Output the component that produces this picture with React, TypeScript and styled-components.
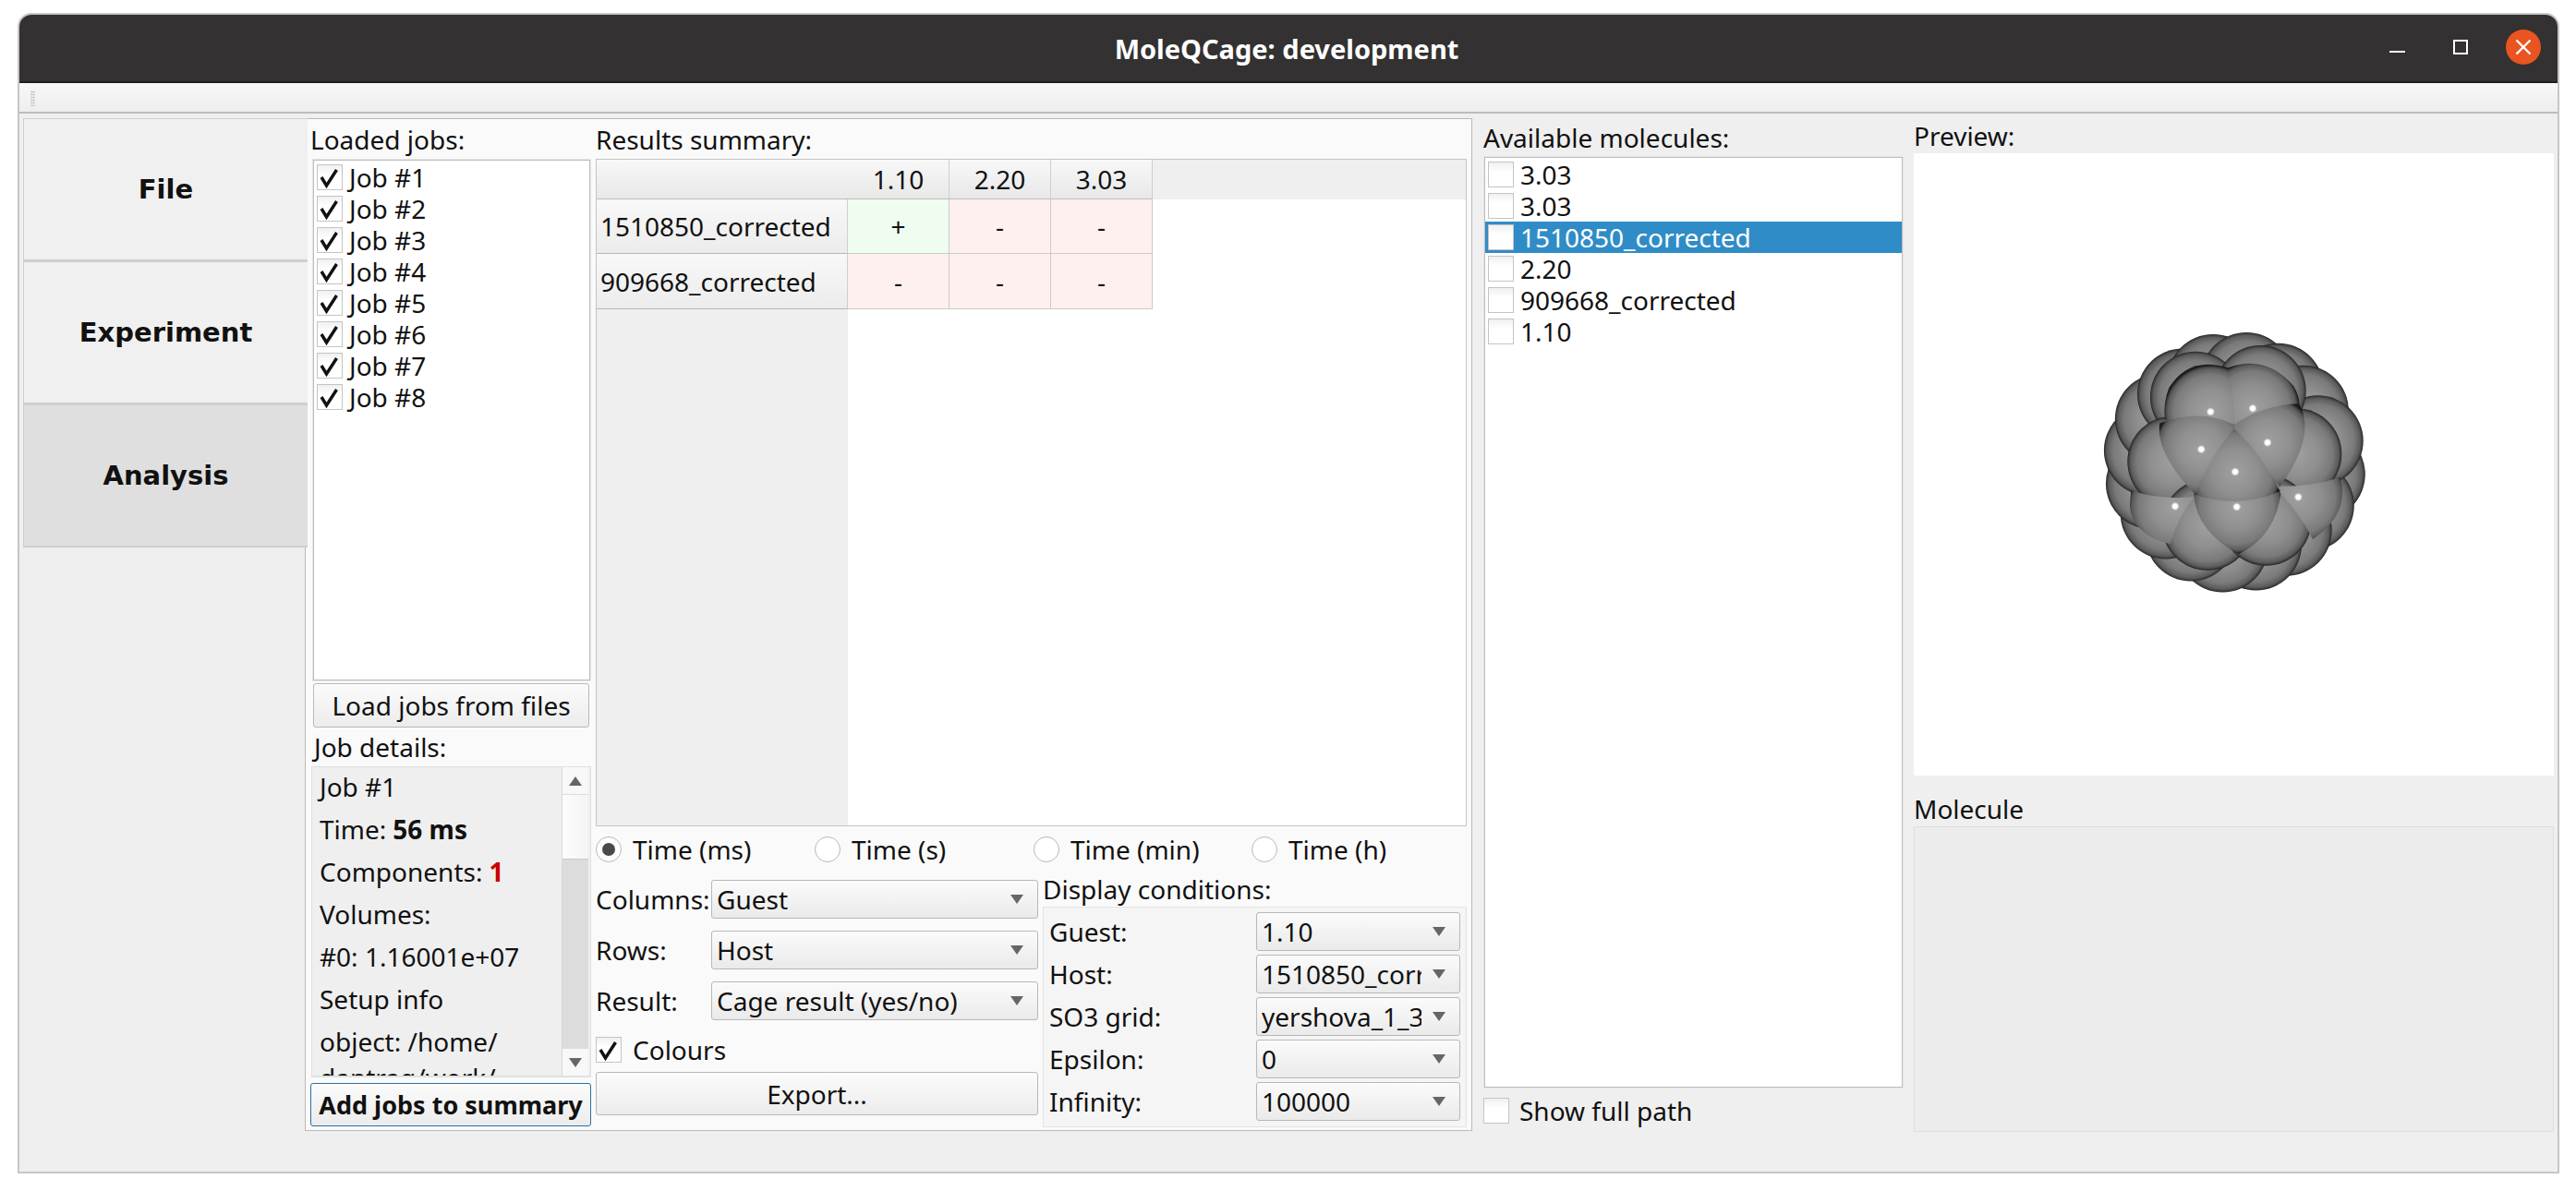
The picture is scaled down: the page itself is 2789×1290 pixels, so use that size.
import React from "react";
import styled, { createGlobalStyle } from "styled-components";

const GlobalStyle = createGlobalStyle`
  html, body { margin: 0; padding: 0; background: #fff; }
  body { font-family: "Noto Sans", "Open Sans", sans-serif; font-size: 28px; color: #111; }
  * { box-sizing: border-box; }
`;

const Screen = styled.div`
  width: 2789px;
  height: 1290px;
  padding: 14px 18px 19px 19px;
  background: #fff;
`;

const Window = styled.div`
  height: 100%;
  display: flex;
  flex-direction: column;
  background: #efefef;
  border: 2px solid #c6c6c6;
  border-radius: 15px 15px 0 0;
  overflow: hidden;
`;

const TitleBar = styled.header`
  height: 74px;
  flex-shrink: 0;
  position: relative;
  display: flex;
  align-items: center;
  justify-content: center;
  padding-right: 4px;
  background: #333131;
  border-bottom: 2px solid #1f1e1e;
  color: #fff;
  font-weight: 700;
  font-size: 29px;
`;

const WindowButtons = styled.div`
  position: absolute;
  right: 18px;
  top: 0;
  bottom: 2px;
  display: flex;
  align-items: center;
`;

const ToolBar = styled.div`
  height: 33px;
  flex-shrink: 0;
  background: linear-gradient(#f7f7f7, #eeeeee);
  border-bottom: 2px solid #bcbcbc;
  padding: 8px 0 0 12px;
`;

const Grip = styled.div`
  width: 5px;
  height: 17px;
  background-image: radial-gradient(#cccccc 1px, transparent 1px);
  background-size: 2.5px 3px;
`;

const Content = styled.main`
  flex: 1;
  min-height: 0;
  display: grid;
  grid-template-columns: 305px 1264px 466px 705px;
  padding: 5px 0 0 4px;
`;

const Tabs = styled.nav`
  position: relative;
  z-index: 1;
  margin-right: -3px;
  display: flex;
  flex-direction: column;
  align-items: stretch;
`;

const Tab = styled.div<{ $active?: boolean }>`
  height: 155px;
  display: flex;
  align-items: center;
  justify-content: center;
  font-family: "DejaVu Sans", sans-serif;
  font-weight: 700;
  font-size: 29px;
  background: ${(p) => (p.$active ? "#dfdfdf" : "#f0f0f0")};
  border: 1px solid #cfcfcf;
  border-right: 0;
  border-bottom-width: 2px;
`;

const MainFrame = styled.section`
  height: 1097px;
  background: #fafafa;
  border: 1px solid #b9b9b9;
  display: grid;
  grid-template-columns: 310px minmax(0, 1fr);
`;

const JobsColumn = styled.div`
  display: flex;
  flex-direction: column;
  padding: 0 1px 0 5px;
`;

const Label = styled.div<{ $height?: number; $top?: number; $left?: number }>`
  height: ${(p) => p.$height ?? 44}px;
  flex-shrink: 0;
  display: flex;
  align-items: center;
  line-height: 1;
  white-space: nowrap;
  padding-top: ${(p) => p.$top ?? 0}px;
  padding-left: ${(p) => p.$left ?? 0}px;
`;

const ListBox = styled.div<{ $height: number; $left: number; $right?: number }>`
  height: ${(p) => p.$height}px;
  margin-left: ${(p) => p.$left}px;
  margin-right: ${(p) => p.$right ?? 0}px;
  flex-shrink: 0;
  background: #fff;
  border: 1px solid #bdbdbd;
  outline: 1px solid #e6e6e6;
  padding: 1px 0;
`;

const ListRow = styled.div<{ $selected?: boolean }>`
  height: 34px;
  display: flex;
  align-items: center;
  gap: 7px;
  padding-left: 3px;
  line-height: 1;
  white-space: nowrap;
  background: ${(p) => (p.$selected ? "#308cc6" : "transparent")};
  color: ${(p) => (p.$selected ? "#fff" : "#111")};
`;

const CheckBox = styled.span`
  width: 28px;
  height: 28px;
  flex-shrink: 0;
  display: inline-flex;
  align-items: center;
  justify-content: center;
  background: linear-gradient(#f0f0f0, #fff 40%);
  border: 1px solid #c4c4c4;
`;

const PushButton = styled.div<{ $focus?: boolean; $top?: number }>`
  height: ${(p) => (p.$focus ? 47 : 48)}px;
  flex-shrink: 0;
  margin-top: ${(p) => p.$top ?? 0}px;
  display: flex;
  align-items: center;
  justify-content: center;
  line-height: 1;
  white-space: nowrap;
  background: linear-gradient(#fbfbfb, #ececec);
  border: 1px solid ${(p) => (p.$focus ? "#2c6f9f" : "#b8b8b8")};
  border-radius: 3px;
  font-weight: ${(p) => (p.$focus ? 700 : 400)};
  font-size: ${(p) => (p.$focus ? 27 : 28)}px;
`;

const LoadButton = styled(PushButton)`
  margin-left: 3px;
  margin-right: 2px;
`;

const Details = styled.div`
  height: 337px;
  flex-shrink: 0;
  margin: 0 0 6px 1px;
  display: flex;
  background: #efefef;
  border: 1px solid #e0e0e0;
  border-bottom-width: 2px;
  overflow: hidden;
`;

const DetailsText = styled.div`
  flex: 1;
  min-width: 0;
  padding: 0 5px 0 8px;
  margin-top: -2px;
  overflow: hidden;
`;

const DetailLine = styled.div<{ $wrapped?: boolean }>`
  height: 46px;
  margin-top: ${(p) => (p.$wrapped ? -7 : 0)}px;
  display: flex;
  align-items: center;
  gap: 7px;
  line-height: 1;
  white-space: nowrap;
`;

const Strong = styled.b<{ $red?: boolean }>`
  color: ${(p) => (p.$red ? "#cc0000" : "inherit")};
`;

const ScrollBar = styled.div`
  width: 29px;
  flex-shrink: 0;
  display: flex;
  flex-direction: column;
  margin-right: 2px;
  background: #dcdcdc;
  border-left: 1px solid #d8d8d8;
`;

const ScrollArrow = styled.div`
  height: 29px;
  flex-shrink: 0;
  display: flex;
  align-items: center;
  justify-content: center;
  background: #f8f8f8;
`;

const ScrollHandle = styled.div`
  height: 71px;
  flex-shrink: 0;
  background: linear-gradient(90deg, #fdfdfd, #f4f4f4);
  border-top: 1px solid #dedede;
  border-bottom: 1px solid #c8c8c8;
`;

const ScrollTrack = styled.div`
  flex: 1;
`;

const ResultsColumn = styled.div`
  display: flex;
  flex-direction: column;
  min-width: 0;
  padding: 0 5px 0 4px;
`;

const TableBox = styled.div`
  height: 723px;
  flex-shrink: 0;
  display: grid;
  grid-template-columns: 272px 110px 110px 110px 1fr;
  grid-template-rows: 43px 59px 60px 1fr;
  background: #fff;
  border: 1px solid #c4c4c4;
  margin-top: -1px;
`;

const HeaderCell = styled.div`
  display: flex;
  align-items: center;
  justify-content: center;
  line-height: 1;
  background: linear-gradient(#f8f8f8, #e8e8e8);
  border-right: 1px solid #cfcfcf;
  border-bottom: 1px solid #bdbdbd;
`;

const CornerCell = styled(HeaderCell)`
  border-right: 0;
`;

const HeaderFill = styled.div`
  background: #efefef;
`;

const RowHead = styled.div`
  display: flex;
  align-items: center;
  padding-left: 4px;
  line-height: 1;
  white-space: nowrap;
  background: linear-gradient(#f8f8f8, #ececec);
  border-bottom: 1px solid #b8b8b8;
  border-right: 1px solid #cfcfcf;
`;

const RowHeadFill = styled.div`
  background: #efefef;
`;

const ResultCell = styled.div<{ $ok?: boolean }>`
  display: flex;
  align-items: center;
  justify-content: center;
  line-height: 1;
  background: ${(p) => (p.$ok ? "#effdf0" : "#fef0ee")};
  border-right: 1px solid #cbcbcb;
  border-bottom: 1px solid #cbcbcb;
`;

const RadioRow = styled.div`
  height: 50px;
  flex-shrink: 0;
  display: grid;
  grid-template-columns: 237px 237px 236px 1fr;
  align-items: center;
`;

const RadioItem = styled.div`
  display: flex;
  align-items: center;
  gap: 12px;
  line-height: 1;
  white-space: nowrap;
`;

const Radio = styled.span<{ $on?: boolean }>`
  width: 28px;
  height: 28px;
  flex-shrink: 0;
  border-radius: 50%;
  background: #fff;
  border: 1px solid #b8b8b8;
  display: flex;
  align-items: center;
  justify-content: center;
  &::after {
    content: "";
    display: ${(p) => (p.$on ? "block" : "none")};
    width: 14px;
    height: 14px;
    border-radius: 50%;
    background: #4a4a4a;
  }
`;

const BottomGrid = styled.div`
  flex: 1;
  min-height: 0;
  display: grid;
  grid-template-columns: 479px minmax(0, 1fr);
  gap: 5px;
`;

const ViewForm = styled.div`
  display: flex;
  flex-direction: column;
  padding-top: 1px;
`;

const FormRow = styled.div`
  height: 55px;
  flex-shrink: 0;
  display: grid;
  grid-template-columns: 125px minmax(0, 1fr);
  align-items: center;
  white-space: nowrap;
  line-height: 1;
`;

const Combo = styled.div`
  height: 42px;
  min-width: 0;
  display: flex;
  align-items: center;
  gap: 11px;
  padding: 0 14px 0 5px;
  line-height: 1;
  white-space: nowrap;
  background: linear-gradient(#fbfbfb, #eaeaea);
  border: 1px solid #b8b8b8;
  border-radius: 3px;
`;

const ComboText = styled.span`
  flex: 1;
  min-width: 0;
  overflow: hidden;
  padding: 4px 0;
`;

const ColoursRow = styled.div`
  height: 38px;
  flex-shrink: 0;
  margin-top: 7px;
  display: flex;
  align-items: center;
  gap: 12px;
  line-height: 1;
`;

const ExportButton = styled(PushButton)`
  height: 47px;
`;

const ConditionsColumn = styled.div`
  display: flex;
  flex-direction: column;
  min-width: 0;
`;

const ConditionsBox = styled.div`
  height: 239px;
  flex-shrink: 0;
  margin-top: 2px;
  background: #f5f5f5;
  border: 1px solid #e4e4e4;
  padding: 5px 6px 5px 6px;
  display: flex;
  flex-direction: column;
  gap: 4px;
`;

const ConditionRow = styled.div`
  display: grid;
  grid-template-columns: 224px minmax(0, 1fr);
  align-items: center;
  white-space: nowrap;
  line-height: 1;
`;

const MoleculesColumn = styled.div`
  display: flex;
  flex-direction: column;
  min-width: 0;
  padding-left: 12px;
`;

const ShowPathRow = styled.div`
  height: 38px;
  margin-top: 6px;
  display: flex;
  align-items: center;
  gap: 11px;
  line-height: 1;
`;

const PreviewColumn = styled.div`
  display: flex;
  flex-direction: column;
  min-width: 0;
  padding-left: 12px;
`;

const PreviewBox = styled.div`
  height: 674px;
  flex-shrink: 0;
  padding: 0 0 16px 3px;
  background: #fff;
  display: flex;
  align-items: center;
  justify-content: center;
`;

const MoleculeBox = styled.div`
  height: 331px;
  background: #ececec;
  border: 1px solid #dedede;
`;

const Check = () => (
  <svg width="26" height="26" viewBox="0 0 26 26">
    <path d="M4 13 L9.5 22 L20.5 5" fill="none" stroke="#111" strokeWidth="3.4" />
  </svg>
);

const Arrow = ({ up }: { up?: boolean }) => (
  <svg width="16" height="12" viewBox="0 0 16 12" style={{ flexShrink: 0 }}>
    <path d={up ? "M8 1 L15 11 H1 Z" : "M1 1 H15 L8 11 Z"} fill="#666" />
  </svg>
);

const MinimizeIcon = () => (
  <svg width="17" height="16" viewBox="0 0 17 16">
    <rect y="12" width="17" height="2" fill="#fff" />
  </svg>
);

const MaximizeIcon = () => (
  <svg width="16" height="16" viewBox="0 0 16 16" style={{ margin: "0 41px 0 52px" }}>
    <rect x="1" y="1" width="14" height="14" fill="none" stroke="#fff" strokeWidth="2" />
  </svg>
);

const CloseIcon = () => (
  <svg width="38" height="38" viewBox="0 0 38 38">
    <circle cx="19" cy="19" r="19" fill="#e95420" />
    <path d="M11.5 11.5 L26.5 26.5 M26.5 11.5 L11.5 26.5" stroke="#fff" strokeWidth="2.4" />
  </svg>
);

// outer ring of the cage, evenly spaced so the silhouette stays round
const ringAtoms: [number, number][] = Array.from({ length: 16 }, (_, i) => {
  const a = ((i * 22.5 + 8) * Math.PI) / 180;
  return [598 + 279 * Math.cos(a), 512 + 277 * Math.sin(a)];
});

// coordinates are those of a 400x330 crop at 3x
const midAtoms: [number, number][] = [
  [472, 300], [682, 280], [398, 510], [798, 485], [510, 715], [700, 700],
];

const frontAtoms: { id: string; x: number; y: number; d: string }[] = [
  { id: "a1", x: 605, y: 657, d: "M465 615 Q475 740 612 810 Q735 750 750 600 Z" },
  { id: "a2", x: 405, y: 655, d: "M262 603 Q350 635 467 625 Q415 690 388 778 Q262 745 258 650 Z" },
  { id: "a3", x: 805, y: 625, d: "M745 590 Q860 590 940 560 Q975 680 852 762 Q810 680 745 610 Z" },
  { id: "a4", x: 520, y: 348, d: "M577 205 Q450 165 385 270 Q365 320 372 375 L597 395 Q595 290 577 205 Z" },
  { id: "a5", x: 657, y: 337, d: "M577 205 Q700 160 790 265 Q810 300 808 330 L597 395 Q595 290 577 205 Z" },
  { id: "a6", x: 490, y: 470, d: "M597 390 Q490 335 355 385 Q340 480 470 617 L597 403 Z" },
  { id: "a7", x: 705, y: 448, d: "M597 390 Q690 325 808 322 Q865 430 745 590 L597 403 Z" },
  { id: "a8", x: 600, y: 543, d: "M597 403 Q520 490 470 617 Q610 665 745 607 Q690 490 597 403 Z" },
];

const glints = [
  [520, 348], [657, 337], [490, 470], [705, 448], [600, 543], [405, 655], [605, 657], [805, 625],
];

const stops = (
  <>
    <stop offset="0" stopColor="#a0a0a0" />
    <stop offset="0.5" stopColor="#8f8f8f" />
    <stop offset="0.8" stopColor="#7a7a7a" />
    <stop offset="0.93" stopColor="#5c5c5c" />
    <stop offset="0.98" stopColor="#3a3a3a" />
    <stop offset="1" stopColor="#1c1c1c" />
  </>
);

const Molecule = () => (
  <svg width="400" height="330" viewBox="0 0 1200 990">
    <defs>
      <radialGradient id="ball">{stops}</radialGradient>
      {frontAtoms.map((a) => (
        <radialGradient key={a.id} id={a.id} gradientUnits="userSpaceOnUse" cx={a.x} cy={a.y} r={150}>
          {stops}
        </radialGradient>
      ))}
      <radialGradient id="glint">
        <stop offset="0.5" stopColor="#fff" />
        <stop offset="1" stopColor="#fff" stopOpacity="0" />
      </radialGradient>
    </defs>
    {ringAtoms.concat(midAtoms).map(([x, y]) => (
      <circle key={`${x}-${y}`} cx={x} cy={y} r={148} fill="url(#ball)" />
    ))}
    {frontAtoms.map((a) => (
      <path key={a.id} d={a.d} fill={`url(#${a.id})`} />
    ))}
    {glints.map(([x, y]) => (
      <circle key={`g${x}`} cx={x} cy={y} r={14} fill="url(#glint)" />
    ))}
  </svg>
);

const jobs = [1, 2, 3, 4, 5, 6, 7, 8];
const molecules = ["3.03", "3.03", "1510850_corrected", "2.20", "909668_corrected", "1.10"];
const conditions = [
  ["Guest:", "1.10"],
  ["Host:", "1510850_corrected"],
  ["SO3 grid:", "yershova_1_3"],
  ["Epsilon:", "0"],
  ["Infinity:", "100000"],
];
const viewOptions = [
  ["Columns:", "Guest"],
  ["Rows:", "Host"],
  ["Result:", "Cage result (yes/no)"],
];

const App: React.FC = () => (
  <Screen>
    <GlobalStyle />
    <Window>
      <TitleBar>
        MoleQCage: development
        <WindowButtons>
          <MinimizeIcon />
          <MaximizeIcon />
          <CloseIcon />
        </WindowButtons>
      </TitleBar>
      <ToolBar>
        <Grip />
      </ToolBar>
      <Content>
        <Tabs>
          <Tab>File</Tab>
          <Tab>Experiment</Tab>
          <Tab $active>Analysis</Tab>
        </Tabs>
        <MainFrame>
          <JobsColumn>
            <Label>Loaded jobs:</Label>
            <ListBox $height={564} $left={3} $right={1}>
              {jobs.map((n) => (
                <ListRow key={n}>
                  <CheckBox>
                    <Check />
                  </CheckBox>
                  Job #{n}
                </ListRow>
              ))}
            </ListBox>
            <LoadButton $top={3}>Load jobs from files</LoadButton>
            <Label $height={42} $left={4}>
              Job details:
            </Label>
            <Details>
              <DetailsText>
                <DetailLine>Job #1</DetailLine>
                <DetailLine>
                  Time: <Strong>56 ms</Strong>
                </DetailLine>
                <DetailLine>
                  Components: <Strong $red>1</Strong>
                </DetailLine>
                <DetailLine>Volumes:</DetailLine>
                <DetailLine>#0: 1.16001e+07</DetailLine>
                <DetailLine>Setup info</DetailLine>
                <DetailLine>object: /home/</DetailLine>
                <DetailLine $wrapped>dantrag/work/</DetailLine>
              </DetailsText>
              <ScrollBar>
                <ScrollArrow>
                  <Arrow up />
                </ScrollArrow>
                <ScrollHandle />
                <ScrollTrack />
                <ScrollArrow>
                  <Arrow />
                </ScrollArrow>
              </ScrollBar>
            </Details>
            <PushButton $focus>Add jobs to summary</PushButton>
          </JobsColumn>
          <ResultsColumn>
            <Label>Results summary:</Label>
            <TableBox>
              <CornerCell />
              <HeaderCell>1.10</HeaderCell>
              <HeaderCell>2.20</HeaderCell>
              <HeaderCell>3.03</HeaderCell>
              <HeaderFill />
              <RowHead>1510850_corrected</RowHead>
              <ResultCell $ok>+</ResultCell>
              <ResultCell>-</ResultCell>
              <ResultCell>-</ResultCell>
              <div />
              <RowHead>909668_corrected</RowHead>
              <ResultCell>-</ResultCell>
              <ResultCell>-</ResultCell>
              <ResultCell>-</ResultCell>
              <div />
              <RowHeadFill />
            </TableBox>
            <RadioRow>
              <RadioItem>
                <Radio $on />
                Time (ms)
              </RadioItem>
              <RadioItem>
                <Radio />
                Time (s)
              </RadioItem>
              <RadioItem>
                <Radio />
                Time (min)
              </RadioItem>
              <RadioItem>
                <Radio />
                Time (h)
              </RadioItem>
            </RadioRow>
            <BottomGrid>
              <ViewForm>
                {viewOptions.map(([label, value]) => (
                  <FormRow key={label}>
                    {label}
                    <Combo>
                      <ComboText>{value}</ComboText>
                      <Arrow />
                    </Combo>
                  </FormRow>
                ))}
                <ColoursRow>
                  <CheckBox>
                    <Check />
                  </CheckBox>
                  Colours
                </ColoursRow>
                <ExportButton $top={5}>Export...</ExportButton>
              </ViewForm>
              <ConditionsColumn>
                <Label $height={35}>Display conditions:</Label>
                <ConditionsBox>
                  {conditions.map(([label, value]) => (
                    <ConditionRow key={label}>
                      {label}
                      <Combo>
                        <ComboText>{value}</ComboText>
                        <Arrow />
                      </Combo>
                    </ConditionRow>
                  ))}
                </ConditionsBox>
              </ConditionsColumn>
            </BottomGrid>
          </ResultsColumn>
        </MainFrame>
        <MoleculesColumn>
          <Label $height={42}>Available molecules:</Label>
          <ListBox $height={1008} $left={1}>
            {molecules.map((m, i) => (
              <ListRow key={i} $selected={i === 2}>
                <CheckBox />
                {m}
              </ListRow>
            ))}
          </ListBox>
          <ShowPathRow>
            <CheckBox />
            Show full path
          </ShowPathRow>
        </MoleculesColumn>
        <PreviewColumn>
          <Label $height={38}>Preview:</Label>
          <PreviewBox>
            <Molecule />
          </PreviewBox>
          <Label $height={55} $top={16}>
            Molecule
          </Label>
          <MoleculeBox />
        </PreviewColumn>
      </Content>
    </Window>
  </Screen>
);

export default App;
